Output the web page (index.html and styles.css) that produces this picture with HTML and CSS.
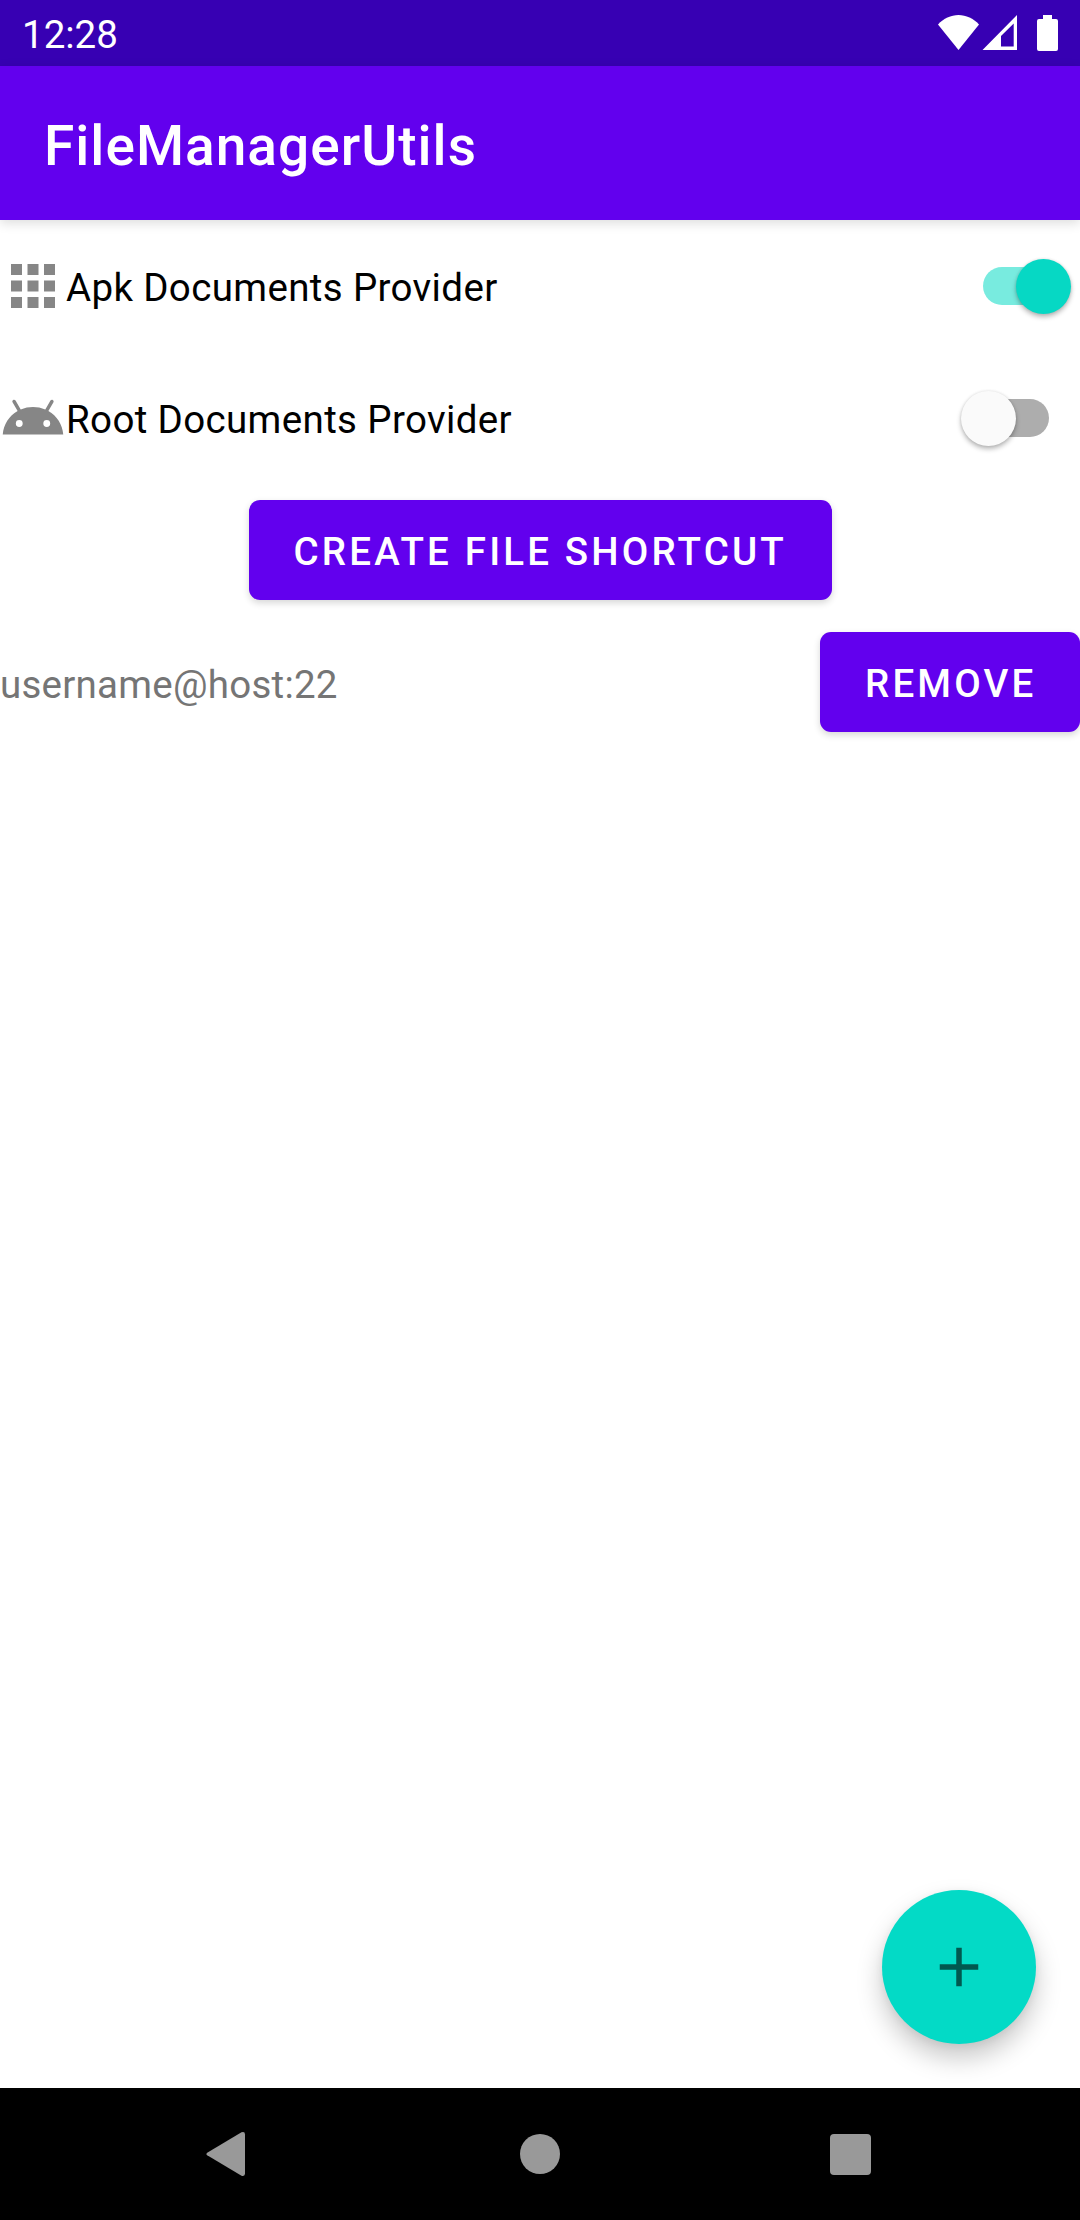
FILE: index.html
```html
<!DOCTYPE html>
<html lang="en">
<head>
<meta charset="utf-8">
<title>FileManagerUtils</title>
<link rel="stylesheet" href="styles.css">
</head>
<body>
<div class="screen">
  <header class="status-bar">
    <span class="clock">12:28</span>
    <svg class="status-icons" width="120" height="36" viewBox="938 15 120 36" fill="#fff">
      <path d="M958.5 50L938 24.500C943.500 18.500 951 15 958.500 15S973.500 18.500 979 24.500Z"/>
      <path fill-rule="evenodd" d="M982.500 50L1017 15V50ZM1001 46.500H1013.700V23.500L1001 36Z"/>
      <path d="M1043 15h9v4h4q2 0 2 2v28q0 2-2 2h-17q-2 0-2-2v-28q0-2 2-2h4z"/>
    </svg>
  </header>
  <div class="app-bar"><h1 class="title">FileManagerUtils</h1></div>
  <main class="content">
    <label class="row">
      <svg class="icon" viewBox="0 0 24 24"><path d="M4 8h4V4H4v4zm6 12h4v-4h-4v4zm-6 0h4v-4H4v4zm0-6h4v-4H4v4zm6 0h4v-4h-4v4zm6-10v4h4V4h-4zm-6 4h4V4h-4v4zm6 6h4v-4h-4v4zm0 6h4v-4h-4v4z"/></svg>
      <span class="label">Apk Documents Provider</span>
      <span class="switch switch-on"><span class="thumb"></span></span>
    </label>
    <label class="row">
      <svg class="icon" viewBox="0 0 24 24"><path d="M17.600 9.480l1.840-3.180c.16-.31.04-.69-.26-.85-.29-.15-.65-.06-.83.22l-1.880 3.240c-2.860-1.210-6.080-1.210-8.940 0L5.650 5.670c-.19-.29-.58-.38-.87-.2-.28.18-.37.54-.22.83L6.400 9.480C3.300 11.250 1.280 14.440 1 18h22c-.28-3.560-2.300-6.750-5.400-8.520zM7 15.250a1.250 1.250 0 1 1 0-2.500 1.250 1.250 0 0 1 0 2.500zm10 0a1.250 1.250 0 1 1 0-2.500 1.250 1.250 0 0 1 0 2.500z"/></svg>
      <span class="label">Root Documents Provider</span>
      <span class="switch"><span class="thumb"></span></span>
    </label>
    <div class="row row-center">
      <button class="button button-create">CREATE FILE SHORTCUT</button>
    </div>
    <div class="row">
      <span class="server">username@host:22</span>
      <button class="button button-remove">REMOVE</button>
    </div>
    <button class="fab" aria-label="Add">
      <svg width="66" height="66" viewBox="0 0 24 24"><path fill="#01584f" d="M19 13h-6v6h-2v-6H5v-2h6V5h2v6h6v2z"/></svg>
    </button>
  </main>
  <nav class="nav-bar">
    <svg width="40" height="46" viewBox="0 0 40 46"><path d="M1.200 21.700L35.500 1.300Q39 .200 39 3.500V42.500Q39 45.800 35.500 44.700L1.200 24.300Q-.400 23 1.200 21.700Z"/></svg>
    <svg class="nav-home" width="40" height="40" viewBox="0 0 40 40"><circle cx="20" cy="20" r="20"/></svg>
    <svg width="41" height="41" viewBox="0 0 41 41"><rect width="41" height="41" rx="4"/></svg>
  </nav>
</div>
</body>
</html>
```
FILE: styles.css
```css
* {
  box-sizing: border-box;
}

body {
  margin: 0;
  font-family: Roboto, sans-serif;
  font-size: 38.5px;
  color: #000;
}

.screen {
  display: flex;
  flex-direction: column;
  height: 2220px;
  background: #fff;
}

.status-bar {
  display: flex;
  align-items: center;
  justify-content: space-between;
  height: 66px;
  padding: 0 22px;
  background: #3700b3;
  color: #fff;
}

.clock {
  padding-top: 3px;
}

.app-bar {
  display: flex;
  align-items: center;
  height: 154px;
  padding: 0 44px;
  background: #6200ee;
  box-shadow: 0 3px 11px rgba(0, 0, 0, 0.14);
}

.title {
  margin: 0;
  padding-top: 6px;
  color: #fff;
  font-size: 55px;
  font-weight: 500;
  letter-spacing: 1.03px;
}

.content {
  position: relative;
  flex: 1;
}

.row {
  display: flex;
  align-items: center;
  height: 132px;
}

.row-center {
  justify-content: center;
}

.icon {
  width: 66px;
  height: 66px;
  fill: #868686;
}

.label {
  flex: 1;
  padding-top: 2px;
  letter-spacing: 0.36px;
}

.server {
  flex: 1;
  padding-top: 4px;
  color: #757575;
  letter-spacing: 0.25px;
}

.switch {
  display: flex;
  align-items: center;
  width: 66px;
  height: 38px;
  margin-right: 31px;
  border-radius: 19px;
  background: #adadad;
}

.switch-on {
  justify-content: flex-end;
  background: #78ebdf;
}

.thumb {
  flex: none;
  width: 55px;
  height: 55px;
  margin: 0 -22px;
  border-radius: 50%;
  background: #fafafa;
  box-shadow: 0 3px 5px rgba(0, 0, 0, 0.28), 0 0 3px rgba(0, 0, 0, 0.1);
}

.switch-on .thumb {
  background: #06d8c4;
}

.button {
  height: 100px;
  padding: 3px 0 0 45px;
  border: 0;
  border-radius: 11px;
  background: #6200ee;
  color: #fff;
  font: 500 38.5px Roboto, sans-serif;
  letter-spacing: 3.17px;
  text-align: left;
  white-space: nowrap;
  box-shadow: 0 3px 7px rgba(0, 0, 0, 0.16);
}

.button-create {
  width: 583px;
}

.button-remove {
  width: 260px;
}

.fab {
  position: absolute;
  right: 44px;
  bottom: 44px;
  display: flex;
  align-items: center;
  justify-content: center;
  width: 154px;
  height: 154px;
  padding: 0;
  border: 0;
  border-radius: 50%;
  background: #03dac6;
  box-shadow: 0 14px 26px rgba(0, 0, 0, 0.22), 0 2px 8px rgba(0, 0, 0, 0.06);
}

.nav-bar {
  display: flex;
  align-items: center;
  justify-content: space-between;
  height: 132px;
  padding: 0 209px 0 206px;
  background: #000;
  fill: #999;
}

.nav-home {
  margin-left: 3px;
}
```
